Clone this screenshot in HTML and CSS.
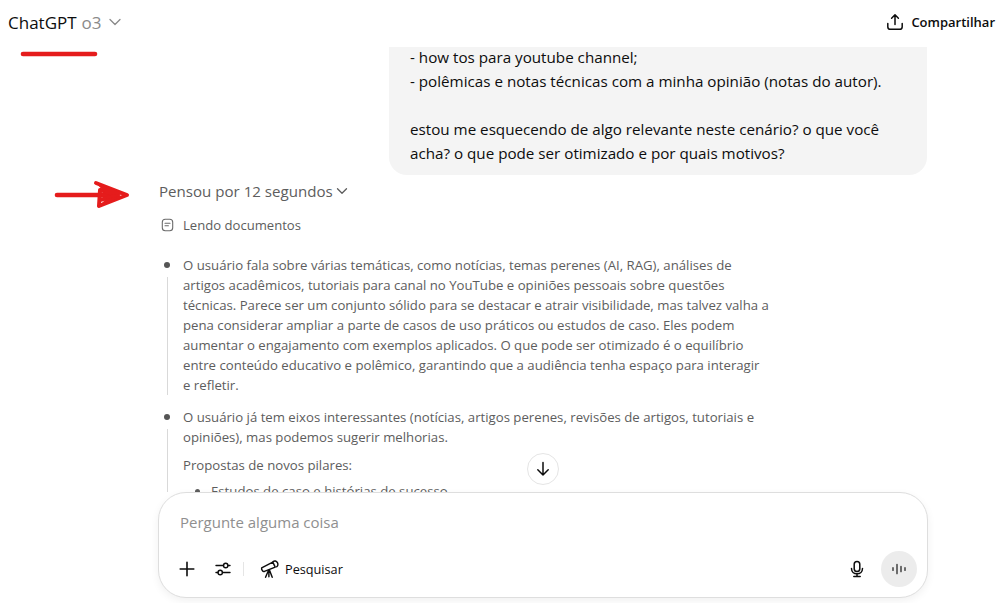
FILE: index.html
```html
<!DOCTYPE html>
<html lang="en">
<head>
    <meta charset="UTF-8">
    <meta name="viewport" content="width=device-width, initial-scale=1.0">
    <title>ChatGPT o3</title>
    <link rel="stylesheet" href="styles.css">
</head>
<body>
    <div class="page">
        <header class="topbar">
            <div class="model">
                <span class="model-name">ChatGPT</span>
                <span class="model-version">o3</span>
                <svg class="model-caret" width="14" height="14" viewBox="0 0 14 14"><path d="M2 4.500 7 9.500 12 4.500" fill="none" stroke="#8a8a8a" stroke-width="1.300" stroke-linecap="round" stroke-linejoin="round"/></svg>
            </div>
            <div class="share">
                <svg width="18" height="18" viewBox="0 0 18 18"><path d="M9 11.500V2.200M5.600 5.200 9 1.800l3.400 3.400M1.800 10.500v3.200a2.600 2.600 0 0 0 2.600 2.600h9.200a2.600 2.600 0 0 0 2.600-2.600v-3.200" fill="none" stroke="#0d0d0d" stroke-width="1.500" stroke-linecap="round" stroke-linejoin="round"/></svg>
                <span>Compartilhar</span>
            </div>
        </header>

        <main class="thread">
            <div class="bubble">
                - how tos para youtube channel;<br>
                - polêmicas e notas técnicas com a minha opinião (notas do autor).<br>
                <br>
                estou me esquecendo de algo relevante neste cenário? o que você<br>
                acha? o que pode ser otimizado e por quais motivos?
            </div>

            <div class="answer">
                <div class="thought-toggle">
                    <span>Pensou por 12 segundos</span>
                    <svg width="12" height="12" viewBox="0 0 12 12"><path d="M1.500 3.800 6 8.300l4.500-4.500" fill="none" stroke="#5d5d5d" stroke-width="1.300" stroke-linecap="round" stroke-linejoin="round"/></svg>
                </div>
                <div class="reading">
                    <svg width="13" height="14" viewBox="0 0 13 14"><rect x="1.300" y="1.300" width="10.400" height="11.400" rx="3" fill="none" stroke="#6b6b6b" stroke-width="1.100"/><path d="M4 5.200h5M4 7.800h3.400" stroke="#6b6b6b" stroke-width="1.100" stroke-linecap="round"/></svg>
                    <span>Lendo documentos</span>
                </div>

                <div class="step">
                    <p>O usuário fala sobre várias temáticas, como notícias, temas perenes (AI, RAG), análises de<br>
                    artigos acadêmicos, tutoriais para canal no YouTube e opiniões pessoais sobre questões<br>
                    técnicas. Parece ser um conjunto sólido para se destacar e atrair visibilidade, mas talvez valha a<br>
                    pena considerar ampliar a parte de casos de uso práticos ou estudos de caso. Eles podem<br>
                    aumentar o engajamento com exemplos aplicados. O que pode ser otimizado é o equilíbrio<br>
                    entre conteúdo educativo e polêmico, garantindo que a audiência tenha espaço para interagir<br>
                    e refletir.</p>
                </div>
                <div class="step">
                    <p>O usuário já tem eixos interessantes (notícias, artigos perenes, revisões de artigos, tutoriais e<br>
                    opiniões), mas podemos sugerir melhorias.</p>
                    <p class="step-sub">Propostas de novos pilares:</p>
                    <ul class="step-list">
                        <li>Estudos de caso e histórias de sucesso</li>
                    </ul>
                </div>
            </div>

            <button class="scroll-down">
                <svg width="18" height="18" viewBox="0 0 18 18"><path d="M9 2.500v12.500M3.800 9.800 9 15l5.200-5.200" fill="none" stroke="#0d0d0d" stroke-width="1.500" stroke-linecap="round" stroke-linejoin="round"/></svg>
            </button>
        </main>

        <footer class="composer">
            <div class="composer-input">Pergunte alguma coisa</div>
            <div class="composer-tools">
                <svg class="tool" width="18" height="18" viewBox="0 0 18 18"><path d="M9 2.200v13.600M2.200 9h13.600" stroke="#0d0d0d" stroke-width="1.600" stroke-linecap="round"/></svg>
                <svg class="tool tool-sliders" width="18" height="18" viewBox="0 0 18 18"><g fill="none" stroke="#0d0d0d" stroke-width="1.400" stroke-linecap="round"><path d="M2 5.500h7.500M14 5.500h2M2 12.500h2M8.500 12.500H16"/><circle cx="11.700" cy="5.500" r="2.200"/><circle cx="6.200" cy="12.500" r="2.200"/></g></svg>
                <span class="tool-sep"></span>
                <div class="search-tool">
                    <svg width="20" height="20" viewBox="0 0 18 18"><g fill="none" stroke="#0d0d0d" stroke-width="1.300" stroke-linecap="round" stroke-linejoin="round"><path d="M1.500 8 11.500 2.800l2.200 4.500L4 11.200a1.500 1.500 0 0 1-1.800-.7L1.500 9.300z"/><path d="M11.800 2.300c1.200-.9 3-.6 3.900 1 .8 1.500.4 3.100-.8 3.700"/><path d="M7.500 10.500 5 16.500M8.500 10 11 16.500M8 11v5"/></g></svg>
                    <span>Pesquisar</span>
                </div>
                <svg class="tool tool-mic" width="18" height="18" viewBox="0 0 18 18"><g fill="none" stroke="#0d0d0d" stroke-width="1.500" stroke-linecap="round"><rect x="6.200" y="1.500" width="5.600" height="10" rx="2.800"/><path d="M3.500 8.500c0 3.200 2.400 5.300 5.500 5.300s5.500-2.100 5.500-5.300M9 14v2.200M5.800 16.400h6.400"/></g></svg>
                <div class="voice">
                    <svg width="18" height="18" viewBox="0 0 18 18"><path d="M3 7.800v2.400M7 4.500v9M11 6.500v5M15 7.800v2.400" stroke="#555" stroke-width="1.700" stroke-linecap="round"/></svg>
                </div>
            </div>
        </footer>

        <svg class="marks" width="1006" height="603" viewBox="0 0 1006 603">
            <path d="M23 54H95" stroke="#e51c1c" stroke-width="4.600" stroke-linecap="round" fill="none"/>
            <path d="M57 195H112" stroke="#e51c1c" stroke-width="4.600" stroke-linecap="round" fill="none"/>
            <path d="M96 183 127 195 99 206 100 190 118 195 100 200" stroke="#e51c1c" stroke-width="4" stroke-linecap="round" stroke-linejoin="round" fill="none"/>
            <path d="M96 183 127 195 106 194z" fill="#e51c1c"/>
            <path d="M99 206 127 195 106 199z" fill="#e51c1c"/>
        </svg>
    </div>
</body>
</html>
```

FILE: styles.css
```css
html, body {
    margin: 0;
    height: 100%;
}
body {
    font-family: "Open Sans", "Noto Sans", sans-serif;
    color: #0d0d0d;
    background: white;
    overflow: hidden;
}
p {
    margin: 0;
}
.page {
    position: relative;
    display: flex;
    flex-direction: column;
    height: 603px;
}
.topbar {
    display: flex;
    justify-content: space-between;
    align-items: center;
    box-sizing: border-box;
    height: 47px;
    padding: 0 11px 3px 8px;
    flex: none;
}
.model {
    display: flex;
    align-items: center;
    font-size: 17px;
}
.model-version {
    color: #8a8a8a;
    margin-left: 5px;
}
.model-caret {
    margin-left: 6px;
}
.share {
    display: flex;
    align-items: center;
    gap: 7px;
    font-size: 13px;
    font-weight: 600;
}
.thread {
    position: relative;
    height: 445px;
    flex: none;
    overflow: hidden;
}
.bubble {
    width: 517px;
    margin: -30px 0 0 389px;
    padding: 28px 0 10px 21px;
    background: #f4f4f4;
    border-radius: 18px;
    font-size: 15.200px;
    line-height: 24px;
    white-space: nowrap;
}
.answer {
    margin-left: 159px;
    color: #5d5d5d;
}
.thought-toggle {
    display: flex;
    align-items: center;
    gap: 3px;
    margin-top: 5px;
    height: 22px;
    font-size: 15.100px;
}
.reading {
    display: flex;
    align-items: center;
    gap: 9px;
    margin: 13px 0 0 2px;
    height: 20px;
    font-size: 13.100px;
}
.step {
    position: relative;
    margin-top: 20px;
    padding-left: 24px;
    font-size: 13.200px;
    line-height: 20px;
    white-space: nowrap;
}
.step + .step {
    margin-top: 12px;
}
.step::before {
    content: "";
    position: absolute;
    left: 5px;
    top: 7px;
    width: 6px;
    height: 6px;
    border-radius: 50%;
    background: #555;
}
.step::after {
    content: "";
    position: absolute;
    left: 8px;
    top: 22px;
    bottom: 0;
    width: 1px;
    background: #d9d9d9;
}
.step-sub {
    margin-top: 8px;
}
.step-list {
    margin: 6px 0 0;
    padding-left: 28px;
}
.scroll-down {
    position: absolute;
    left: 527px;
    top: 406px;
    display: flex;
    align-items: center;
    justify-content: center;
    width: 32px;
    height: 32px;
    padding: 0;
    background: white;
    border: 1px solid #e5e5e5;
    border-radius: 50%;
}
.composer {
    box-sizing: border-box;
    width: 770px;
    height: 106px;
    margin-left: 158px;
    background: white;
    border: 1px solid #dedede;
    border-radius: 28px;
    box-shadow: 0 3px 8px rgba(0,0,0,0.06);
    flex: none;
}
.composer-input {
    padding: 19px 0 0 21px;
    height: 20px;
    line-height: 20px;
    font-size: 15px;
    color: #8f8f8f;
}
.composer-tools {
    display: flex;
    align-items: center;
    height: 36px;
    margin-top: 19px;
    padding: 0 10px 0 19px;
}
.tool-sliders {
    margin-left: 18px;
}
.tool-sep {
    width: 1px;
    height: 14px;
    margin: 0 16px 0 11px;
    background: #e5e5e5;
}
.search-tool {
    display: flex;
    align-items: center;
    gap: 5px;
    font-size: 12.700px;
}
.tool-mic {
    margin-left: auto;
    margin-right: 15px;
}
.voice {
    display: flex;
    align-items: center;
    justify-content: center;
    width: 36px;
    height: 36px;
    border-radius: 50%;
    background: #ececec;
}
.marks {
    position: absolute;
    left: 0;
    top: 0;
    pointer-events: none;
}
```
